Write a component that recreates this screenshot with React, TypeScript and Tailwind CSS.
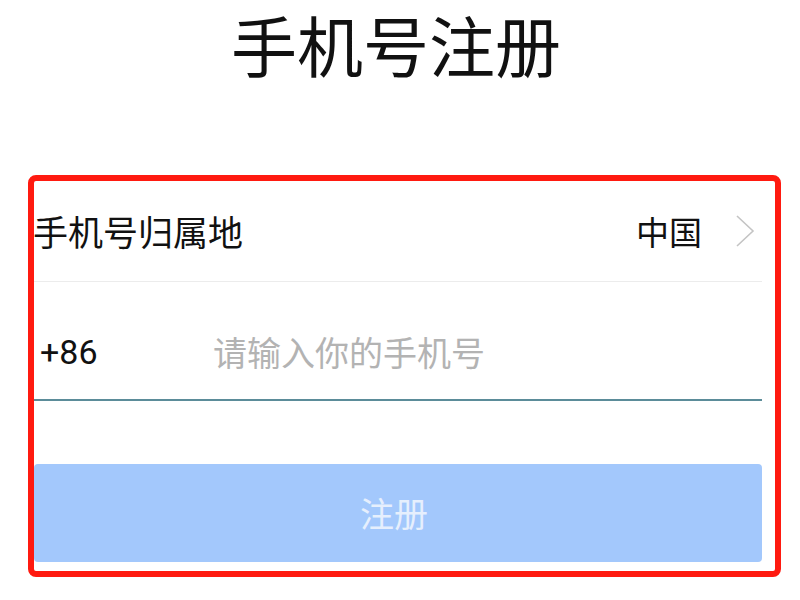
export default function App() {
  return (
    <div
      className="w-[800px] h-[600px] bg-white overflow-hidden text-[#111111]"
      style={{ fontFamily: '"Noto Sans CJK SC", "Noto Sans", sans-serif' }}
    >
      {/* Title */}
      <div className="h-[175px] pt-[8px] pr-[8px]">
        <h1 className="text-center text-[66px] leading-[70px] font-normal">手机号注册</h1>
      </div>

      {/* Form box */}
      <div className="ml-[28px] w-[753px] h-[402px] border-[6px] border-[#ff1a10] rounded-[8px] pr-[13px]">
        {/* Region row */}
        <div className="h-[101px] flex items-center border-b border-[#ececec]">
          <span className="text-[35px] leading-[44px] -ml-[1px]">手机号归属地</span>
          <div className="ml-auto flex items-center">
            <span className="text-[33px] leading-[44px]">中国</span>
            <svg width="22" height="34" viewBox="0 0 22 34" className="ml-[32px] mr-[6px]">
              <polyline points="3,2 19,17 3,32" fill="none" stroke="#c4c4c4" strokeWidth="1.6" />
            </svg>
          </div>
        </div>

        {/* Phone row */}
        <div className="h-[119px] pt-[22px] flex items-center border-b-2 border-[#5b8c99]">
          <span
            className="w-[179px] pl-[6px] text-[34px] leading-[44px]"
            style={{ fontFamily: 'Roboto, "Noto Sans", sans-serif' }}
          >
            +86
          </span>
          <input
            className="flex-1 h-[48px] outline-none text-[34px] placeholder:text-[#b3b3b3] bg-transparent"
            placeholder="请输入你的手机号"
            style={{ fontFamily: '"Noto Sans CJK SC", "Noto Sans", sans-serif' }}
          />
        </div>

        {/* Submit */}
        <button className="mt-[63px] w-full h-[98px] rounded-[4px] bg-[#a3c8fc] text-[#e6effd] text-[34px] leading-[44px] flex items-center justify-center pr-[8px]">
          注册
        </button>
      </div>
    </div>
  );
}
